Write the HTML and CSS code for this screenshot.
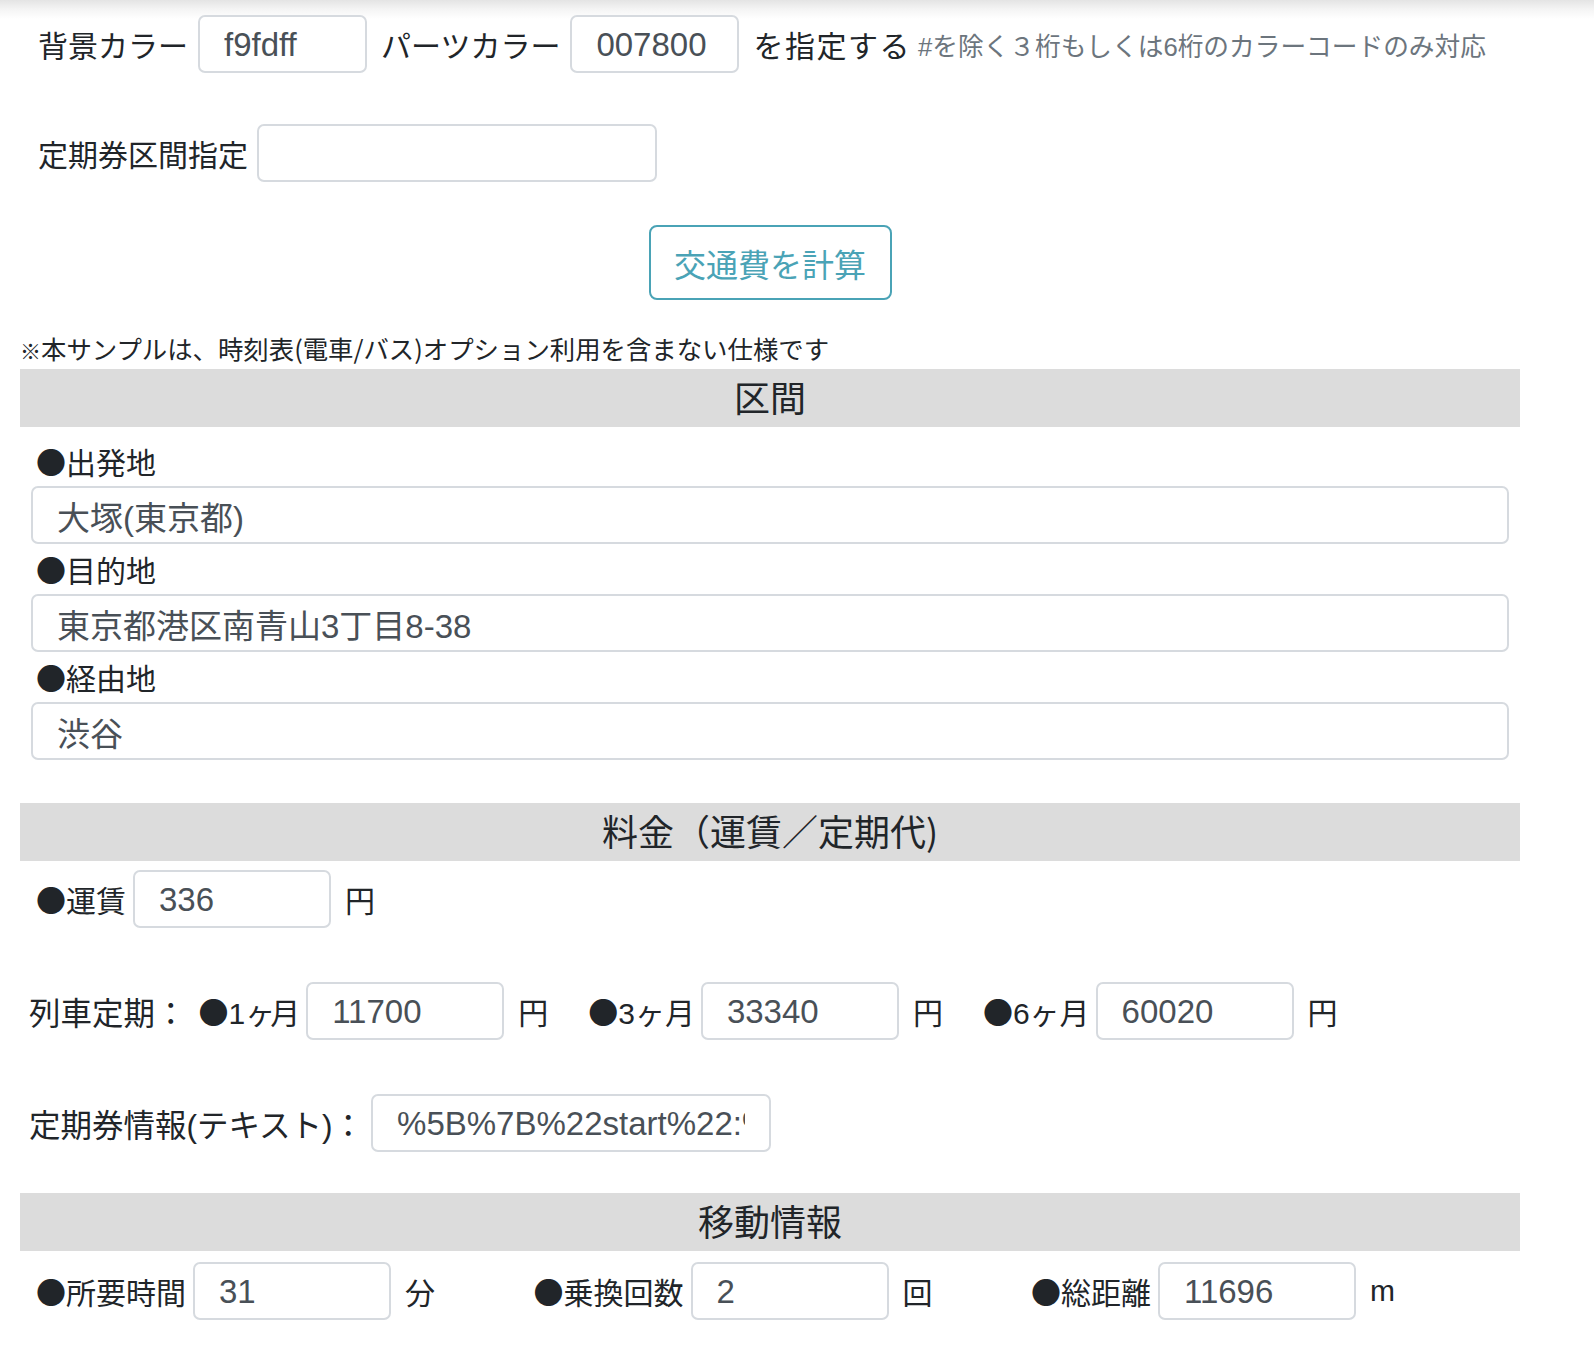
FILE: index.html
```html
<!DOCTYPE html>
<html lang="ja">
<head>
<meta charset="utf-8">
<title>交通費計算</title>
<link rel="stylesheet" href="styles.css">
</head>
<body>
<div class="container">
  <div class="color-row">
    <span class="lbl">背景カラー</span>
    <input class="inp inp-color" type="text" value="f9fdff">
    <span class="lbl lbl-after">パーツカラー</span>
    <input class="inp inp-color" type="text" value="007800">
    <span class="lbl lbl-after lbl-spec">を指定する</span>
    <span class="hint">#を除く３桁もしくは6桁のカラーコードのみ対応</span>
  </div>

  <div class="range-row">
    <span class="lbl">定期券区間指定</span>
    <input class="inp inp-range" type="text" value="">
  </div>

  <button class="calc-btn" type="button">交通費を計算</button>

  <p class="note"><span class="kome">※</span>本サンプルは、時刻表(電車/バス)オプション利用を含まない仕様です</p>

  <div class="sec-head">区間</div>
  <div class="sec-body">
    <div class="field-label"><span class="dot">●</span>出発地</div>
    <input class="inp inp-wide" type="text" value="大塚(東京都)">
    <div class="field-label"><span class="dot">●</span>目的地</div>
    <input class="inp inp-wide" type="text" value="東京都港区南青山3丁目8-38">
    <div class="field-label"><span class="dot">●</span>経由地</div>
    <input class="inp inp-wide" type="text" value="渋谷">
  </div>

  <div class="sec-head sec-head-gap">料金（運賃／定期代)</div>
  <div class="fare-row">
    <span class="lbl"><span class="dot">●</span>運賃</span>
    <input class="inp inp-small" type="text" value="336">
    <span class="lbl unit">円</span>
  </div>

  <div class="teiki-row">
    <span class="lbl lbl-big teiki-title">列車定期：</span>
    <div class="teiki-group">
      <span class="lbl"><span class="dot">●</span>1<span class="ke ke-tight">ヶ</span>月</span>
      <input class="inp inp-small" type="text" value="11700">
      <span class="lbl unit">円</span>
    </div>
    <div class="teiki-group">
      <span class="lbl"><span class="dot">●</span>3<span class="ke">ヶ</span>月</span>
      <input class="inp inp-small" type="text" value="33340">
      <span class="lbl unit">円</span>
    </div>
    <div class="teiki-group">
      <span class="lbl"><span class="dot">●</span>6<span class="ke">ヶ</span>月</span>
      <input class="inp inp-small" type="text" value="60020">
      <span class="lbl unit">円</span>
    </div>
  </div>

  <div class="info-row">
    <span class="lbl lbl-big">定期券情報(テキスト)：</span>
    <input class="inp inp-info" type="text" value="%5B%7B%22start%22:%22%E5%A4%A7%E5%A1%9A%22%7D%5D">
  </div>

  <div class="sec-head sec-head-gap2">移動情報</div>
  <div class="move-row">
    <div class="move-col">
      <span class="lbl"><span class="dot">●</span>所要時間</span>
      <input class="inp inp-small" type="text" value="31">
      <span class="lbl unit">分</span>
    </div>
    <div class="move-col">
      <span class="lbl"><span class="dot">●</span>乗換回数</span>
      <input class="inp inp-small" type="text" value="2">
      <span class="lbl unit">回</span>
    </div>
    <div class="move-col">
      <span class="lbl"><span class="dot">●</span>総距離</span>
      <input class="inp inp-small" type="text" value="11696">
      <span class="lbl unit">m</span>
    </div>
  </div>
</div>
</body>
</html>
```

FILE: styles.css
```css
html, body {
  margin: 0;
  padding: 0;
}

body {
  background: #ffffff linear-gradient(to bottom, #e4e4e4 0, #f4f4f4 9px, #ffffff 19px) no-repeat;
  font-family: "Liberation Sans", "Noto Sans CJK JP", sans-serif;
  color: #212529;
  min-height: 1362px;
}

.container {
  width: 1500px;
  margin-left: 20px;
  padding-top: 15px;
}

.lbl {
  font-size: 30px;
  white-space: nowrap;
  color: #212529;
}

.lbl-big {
  font-size: 31.5px;
}

.dot {
  font-family: "Noto Sans CJK JP", sans-serif;
}

.ke {
  font-family: "Noto Sans CJK JP", sans-serif;
}

.ke-tight {
  letter-spacing: -5px;
}

.inp {
  box-sizing: border-box;
  height: 58px;
  border: 2px solid #d6dadf;
  border-radius: 7px;
  padding: 2px 24px 0;
  font-family: "Liberation Sans", "Noto Sans CJK JP", sans-serif;
  font-size: 33px;
  color: #495057;
  background: #ffffff;
  outline: none;
  margin: 0;
}

/* top color row */
.color-row {
  display: flex;
  align-items: center;
  height: 58px;
  padding-left: 18px;
}

.inp-color {
  width: 169px;
  margin-left: 10px;
}

.lbl-after {
  margin-left: 14px;
}

.lbl-spec {
  letter-spacing: 1.5px;
}

.hint {
  font-size: 25.7px;
  color: #6c757d;
  margin-left: 7px;
  white-space: nowrap;
}

/* range row */
.range-row {
  display: flex;
  align-items: center;
  margin-top: 51px;
  padding-left: 18px;
}

.inp-range {
  width: 400px;
  margin-left: 9px;
}

/* button */
.calc-btn {
  display: block;
  box-sizing: border-box;
  width: 243px;
  height: 75px;
  margin: 43px auto 0;
  border: 2px solid #4aa3b6;
  border-radius: 8px;
  background: #ffffff;
  color: #4aa3b6;
  font-family: "Noto Sans CJK JP", sans-serif;
  font-size: 32px;
  padding: 0;
}

.note {
  margin: 33px 0 0;
  height: 30px;
  font-size: 25.4px;
  line-height: 30px;
  font-family: "Noto Sans CJK JP", sans-serif;
  color: #212529;
  white-space: nowrap;
}

.kome {
  font-size: 21px;
  line-height: 21px;
}

/* section headers */
.sec-head {
  margin-top: 6px;
  height: 58px;
  line-height: 54px;
  background: #dcdcdc;
  text-align: center;
  font-family: "Noto Sans CJK JP", sans-serif;
  font-size: 36px;
  color: #212529;
}

.sec-head-gap {
  margin-top: 43px;
}

.sec-head-gap2 {
  margin-top: 41px;
}

.sec-body {
  padding: 9px 11px 0;
}

.field-label {
  font-size: 30px;
  line-height: 50px;
  height: 50px;
  padding-left: 5px;
  font-family: "Noto Sans CJK JP", sans-serif;
}

.inp-wide {
  display: block;
  width: 100%;
}

/* fare */
.fare-row {
  display: flex;
  align-items: center;
  margin-top: 9px;
  padding-left: 16px;
}

.inp-small {
  width: 198px;
  margin-left: 7px;
}

.unit {
  margin-left: 14px;
}

.teiki-row {
  display: flex;
  align-items: center;
  margin-top: 54px;
  padding-left: 9px;
}

.teiki-title {
  margin-right: 12px;
}

.teiki-group {
  display: flex;
  align-items: center;
  margin-right: 40px;
}

.teiki-group .inp-small {
  margin-left: 6px;
}

.info-row {
  display: flex;
  align-items: center;
  margin-top: 54px;
  padding-left: 9px;
}

.inp-info {
  width: 400px;
  margin-left: 7px;
}

.move-row {
  display: grid;
  grid-template-columns: 497.5px 497.5px 497.5px;
  margin-top: 11px;
  padding-left: 16px;
}

.move-col {
  display: flex;
  align-items: center;
}
```
